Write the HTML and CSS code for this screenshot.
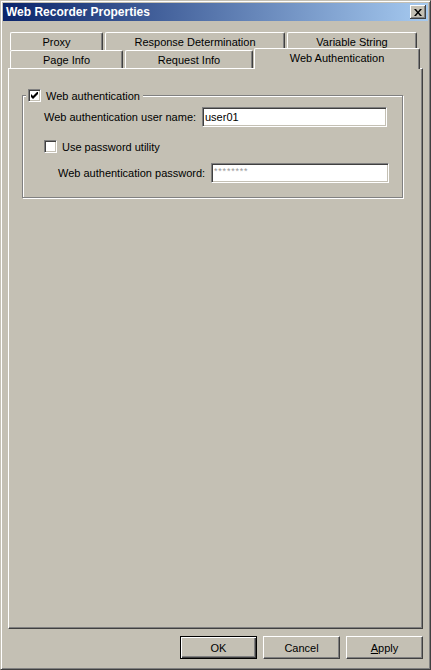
FILE: index.html
```html
<!DOCTYPE html>
<html lang="en">
<head>
    <meta charset="UTF-8">
    <title>Web Recorder Properties</title>
    <link rel="stylesheet" href="styles.css">
</head>
<body>
    <div class="window">
        <div class="titlebar">
            <span class="title">Web Recorder Properties</span>
            <button class="close" title="Close">
                <svg width="8" height="7" viewBox="0 0 8 7"><path d="M0 0h2l2 2.5L6 0h2L5 3.5 8 7H6L4 4.5 2 7H0l3-3.5z" fill="#000"/></svg>
            </button>
        </div>
        <div class="client">
            <div class="tabs">
                <div class="tab-row">
                    <div class="tab tab-proxy">Proxy</div>
                    <div class="tab tab-response">Response Determination</div>
                    <div class="tab tab-variable">Variable String</div>
                </div>
                <div class="tab-row">
                    <div class="tab tab-page">Page Info</div>
                    <div class="tab tab-request">Request Info</div>
                    <div class="tab tab-auth selected">Web Authentication</div>
                </div>
            </div>
            <div class="panel">
                <div class="group">
                    <div class="legend">
                        <span class="check checked">
                            <svg width="7" height="7" viewBox="0 0 7 7"><path d="M0 2v3l2 2 5-5V-1L2 4z" fill="#000"/></svg>
                        </span>
                        <span>Web authentication</span>
                    </div>
                    <div class="field-row user-row">
                        <span class="field-label">Web authentication user name:</span>
                        <input class="textbox" type="text" value="user01">
                    </div>
                    <div class="check-row">
                        <span class="check"></span>
                        <span>Use password utility</span>
                    </div>
                    <div class="field-row pass-row">
                        <span class="field-label">Web authentication password:</span>
                        <span class="textbox masked">********</span>
                    </div>
                </div>
            </div>
            <div class="buttons">
                <button class="btn default">OK</button>
                <button class="btn">Cancel</button>
                <button class="btn"><u>A</u>pply</button>
            </div>
        </div>
    </div>
</body>
</html>
```

FILE: styles.css
```css
body {
    margin: 0;
    background-color: #c4c0b4;
    font-family: 'Liberation Sans', Arial, sans-serif;
    font-size: 11px;
    color: #000;
}
.window {
    box-sizing: border-box;
    width: 431px;
    height: 670px;
    background-color: #c4c0b4;
    border: 1px solid;
    border-color: #c4c0b4 #404040 #404040 #c4c0b4;
    box-shadow: inset 1px 1px #fff, inset -1px -1px #808080;
    padding: 2px 2px 0 2px;
}
.titlebar {
    height: 18px;
    display: flex;
    align-items: center;
    justify-content: space-between;
    padding: 0 2px 0 3px;
    background: linear-gradient(to right, #0a246a, #a6caf0);
}
.title {
    color: white;
    font-weight: bold;
    font-size: 12px;
}
.close {
    box-sizing: border-box;
    width: 16px;
    height: 14px;
    padding: 0;
    display: flex;
    align-items: center;
    justify-content: center;
    background-color: #c4c0b4;
    border: none;
    box-shadow: inset -1px -1px #404040, inset 1px 1px #fff, inset -2px -2px #808080;
}

/* tabs */
.client {
    padding: 11px 5px 0 5px;
}
.tabs {
    padding-left: 2px;
}
.tab-row {
    display: flex;
    gap: 2px;
    height: 18px;
}
.tab {
    box-sizing: border-box;
    height: 18px;
    display: flex;
    align-items: center;
    justify-content: center;
    background-color: #c4c0b4;
    border-top: 1px solid #fff;
    border-left: 1px solid #fff;
    border-right: 1px solid #404040;
    border-radius: 2px 2px 0 0;
    box-shadow: inset -1px 0 #808080;
    padding-top: 1px;
}
.tab-proxy { width: 93px; }
.tab-response { width: 180px; }
.tab-variable { width: 130px; }
.tab-page { width: 113px; }
.tab-request { width: 128px; }
.tab-auth { width: 166px; }
.tab.selected {
    position: relative;
    z-index: 1;
    height: 21px;
    margin: -2px 0 0 -1px;
    padding-bottom: 3px;
}

.panel {
    box-sizing: border-box;
    height: 561px;
    border: 1px solid;
    border-color: #fff #404040 #404040 #fff;
    box-shadow: inset -1px -1px #808080;
    padding: 26px 0 0 13px;
}

/* group box */
.group {
    box-sizing: border-box;
    width: 381px;
    height: 103px;
    border: 1px solid #808080;
    box-shadow: 1px 1px #fff, inset 1px 1px #fff;
}
.legend {
    display: flex;
    width: fit-content;
    align-items: center;
    gap: 5px;
    height: 13px;
    margin: -7px 0 0 3px;
    padding: 0 3px 0 2px;
    background-color: #c4c0b4;
}
.check {
    box-sizing: border-box;
    width: 13px;
    height: 13px;
    display: inline-flex;
    align-items: center;
    justify-content: center;
    background-color: #fff;
    border: 1px solid;
    border-color: #808080 #fff #fff #808080;
    box-shadow: inset 1px 1px #404040, inset -1px -1px #c4c0b4;
}
.field-row {
    display: flex;
    align-items: center;
}
.field-label {
    flex-shrink: 0;
}
.user-row {
    margin-top: 5px;
    padding-left: 21px;
}
.user-row .field-label {
    width: 158px;
}
.user-row .textbox {
    width: 185px;
}
.check-row {
    display: flex;
    align-items: center;
    gap: 5px;
    margin-top: 13px;
    padding-left: 21px;
}
.pass-row {
    margin-top: 10px;
    padding-left: 35px;
}
.pass-row .field-label {
    width: 153px;
}
.pass-row .textbox {
    width: 178px;
}
.textbox {
    box-sizing: border-box;
    height: 20px;
    margin: 0;
    padding: 0 2px;
    font-family: inherit;
    font-size: 11px;
    color: #000;
    background-color: #fff;
    border: 1px solid;
    border-color: #808080 #fff #fff #808080;
    box-shadow: inset 1px 1px #404040, inset -1px -1px #c4c0b4;
    outline: none;
}
.masked {
    display: flex;
    align-items: flex-start;
    padding-top: 2px;
    font-size: 9px;
    letter-spacing: 0.8px;
    color: #9a9a9a;
}

/* dialog buttons */
.buttons {
    display: flex;
    justify-content: flex-end;
    gap: 6px;
    margin-top: 7px;
}
.btn {
    box-sizing: border-box;
    width: 77px;
    height: 23px;
    padding: 0;
    font-family: inherit;
    font-size: 11px;
    color: #000;
    background-color: #c4c0b4;
    border: 1px solid;
    border-color: #fff #404040 #404040 #fff;
    box-shadow: inset -1px -1px #808080;
}
.btn.default {
    border: 1px solid #000;
    box-shadow: inset 1px 1px #fff, inset -1px -1px #404040, inset -2px -2px #808080;
}
.btn u {
    text-decoration: underline;
}
```
